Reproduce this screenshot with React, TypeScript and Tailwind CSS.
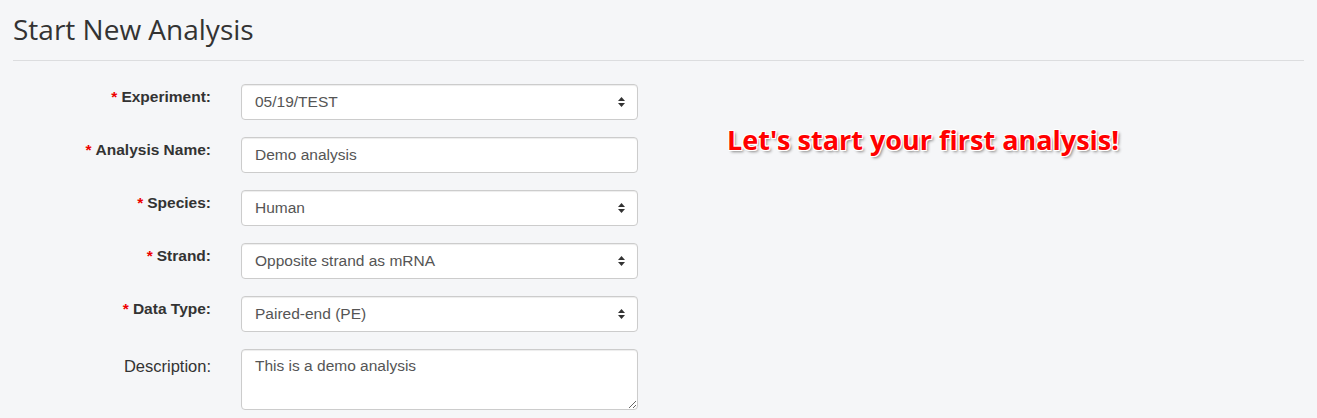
import React from 'react';

type Field = {
  label: string;
  required: boolean;
  kind: 'select' | 'input' | 'textarea';
  value: string;
};

const fields: Field[] = [
  { label: 'Experiment:', required: true, kind: 'select', value: '05/19/TEST' },
  { label: 'Analysis Name:', required: true, kind: 'input', value: 'Demo analysis' },
  { label: 'Species:', required: true, kind: 'select', value: 'Human' },
  { label: 'Strand:', required: true, kind: 'select', value: 'Opposite strand as mRNA' },
  { label: 'Data Type:', required: true, kind: 'select', value: 'Paired-end (PE)' },
  { label: 'Description:', required: false, kind: 'textarea', value: 'This is a demo analysis' },
];

const SortIcon = () => (
  <svg width="9" height="12" viewBox="0 0 9 12" className="pointer-events-none absolute right-[12px] top-1/2 -translate-y-1/2">
    <path d="M4.5 1 L8 5 L1 5 Z" fill="#333" />
    <path d="M4.5 11 L8 7 L1 7 Z" fill="#333" />
  </svg>
);

const control =
  'w-[397px] rounded-[4px] border border-[#ccc] bg-white pl-[13px] text-[15.5px] text-[#555] outline-none shadow-[inset_0_1px_1px_rgba(0,0,0,0.075)]';

const App: React.FC = () => {
  return (
    <div className="min-h-[418px] bg-[#f5f6f8] px-[13px] font-['Liberation_Sans',Arial,sans-serif]">
      <h3 className="pt-[14px] text-[28px] leading-[1.1] text-[#333] font-['Open_Sans',sans-serif]">
        Start New Analysis
      </h3>
      <hr className="mt-[15px] border-t border-[#dcdddf]" />

      <div className="mt-[23px] flex items-start">
        <form className="flex flex-col gap-[17px]">
          {fields.map((f) => (
            <div key={f.label} className="flex items-start gap-[30px]">
              <label
                className={
                  'w-[198px] text-right leading-[22px] text-[#333] ' +
                  (f.required ? 'pt-[2px] text-[15.5px] font-bold' : 'pt-[6px] text-[16.5px]')
                }
              >
                {f.required && <span className="mr-[4px] text-[#e00]">*</span>}
                {f.label}
              </label>
              {f.kind === 'select' && (
                <div className="relative">
                  <select
                    defaultValue={f.value}
                    className={control + ' h-[36px] appearance-none'}
                  >
                    <option>{f.value}</option>
                  </select>
                  <SortIcon />
                </div>
              )}
              {f.kind === 'input' && (
                <input type="text" defaultValue={f.value} className={control + ' h-[36px]'} />
              )}
              {f.kind === 'textarea' && (
                <textarea
                  defaultValue={f.value}
                  className={control + ' h-[61px] pt-[6px] leading-[20px]'}
                />
              )}
            </div>
          ))}
        </form>

        <div className="ml-[89px] mt-[40px] text-[27px] leading-[1.2] font-bold text-[#ff0000] font-['Open_Sans',sans-serif] [text-shadow:1px_1px_0_#fff,-1px_-1px_0_#fff,1px_-1px_0_#fff,-1px_1px_0_#fff,0_1px_0_#fff,0_-1px_0_#fff,2px_2px_3px_#888]">
          Let's start your first analysis!
        </div>
      </div>
    </div>
  );
};

export default App;
